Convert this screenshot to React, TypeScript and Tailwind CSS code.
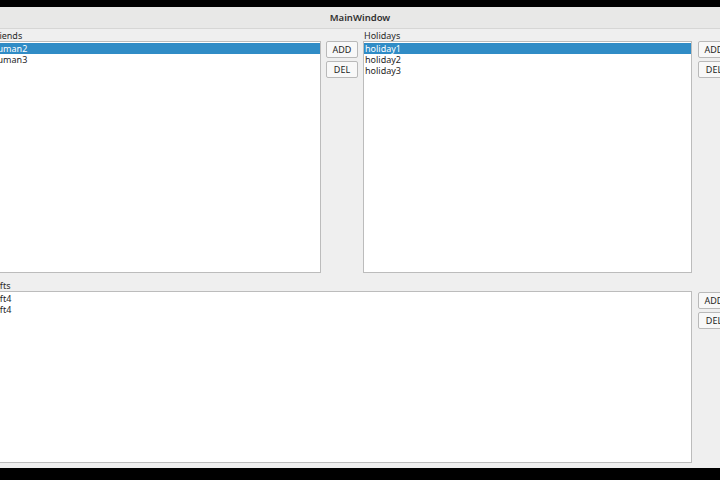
const friends = ['human2', 'human3'];
const holidays = ['holiday1', 'holiday2', 'holiday3'];
const gifts = ['gift4', 'gift4'];

const font = { fontFamily: '"Noto Sans", "Liberation Sans", sans-serif' };

const ListBox = ({
  items,
  selected,
  className,
}: {
  items: string[];
  selected?: number;
  className?: string;
}) => {
  return (
    <div
      className={`flex flex-col border border-[#bcbcbc] bg-white pt-px ${className ?? ''}`}
    >
      {items.map((item, i) => (
        <div
          key={i}
          className={`h-[11px] pl-px text-[9px] leading-[11px] ${
            i === selected ? 'bg-[#308cc6] text-white' : 'text-[#1e1e1e]'
          }`}
        >
          {item}
        </div>
      ))}
    </div>
  );
};

const SideButtons = () => {
  return (
    <div className="flex w-[32px] shrink-0 flex-col gap-[3px]">
      <button className="h-[17px] rounded-[2px] border border-[#b9b9b9] bg-[#f8f8f8] text-[9px] leading-[15px] text-[#1e1e1e]">
        ADD
      </button>
      <button className="h-[17px] rounded-[2px] border border-[#b9b9b9] bg-[#f8f8f8] text-[9px] leading-[15px] text-[#1e1e1e]">
        DEL
      </button>
    </div>
  );
};

const Group = ({ label, children }: { label: string; children: React.ReactNode }) => {
  return (
    <div className="flex flex-col">
      <div className="h-[11px] pl-px text-[9px] leading-[11px] text-[#2a2a2a]">{label}</div>
      {children}
    </div>
  );
};

export default function App() {
  return (
    <div className="flex h-[480px] w-[720px] flex-col overflow-hidden bg-black" style={font}>
      <div className="mt-[7px] flex h-[22px] shrink-0 items-center justify-center border-b border-[#d6d6d5] bg-[#e8e8e7] pt-[2px] text-[9.5px] font-semibold text-[#303030]">
        MainWindow
      </div>
      <div className="flex h-[439px] shrink-0 flex-col bg-[#efefef] pt-px">
        <div className="-ml-[10px] flex gap-[5px]">
          <Group label="Friends">
            <ListBox items={friends} selected={0} className="h-[232px] w-[331px]" />
          </Group>
          <div className="pt-[11px]">
            <SideButtons />
          </div>
          <Group label="Holidays">
            <ListBox items={holidays} selected={0} className="h-[232px] w-[329px]" />
          </Group>
          <div className="ml-px pt-[11px]">
            <SideButtons />
          </div>
        </div>
        <div className="-ml-[10px] mt-[7px] flex gap-[6px]">
          <Group label="Gifts">
            <ListBox items={gifts} className="h-[172px] w-[702px]" />
          </Group>
          <div className="pt-[12px]">
            <SideButtons />
          </div>
        </div>
      </div>
    </div>
  );
}
